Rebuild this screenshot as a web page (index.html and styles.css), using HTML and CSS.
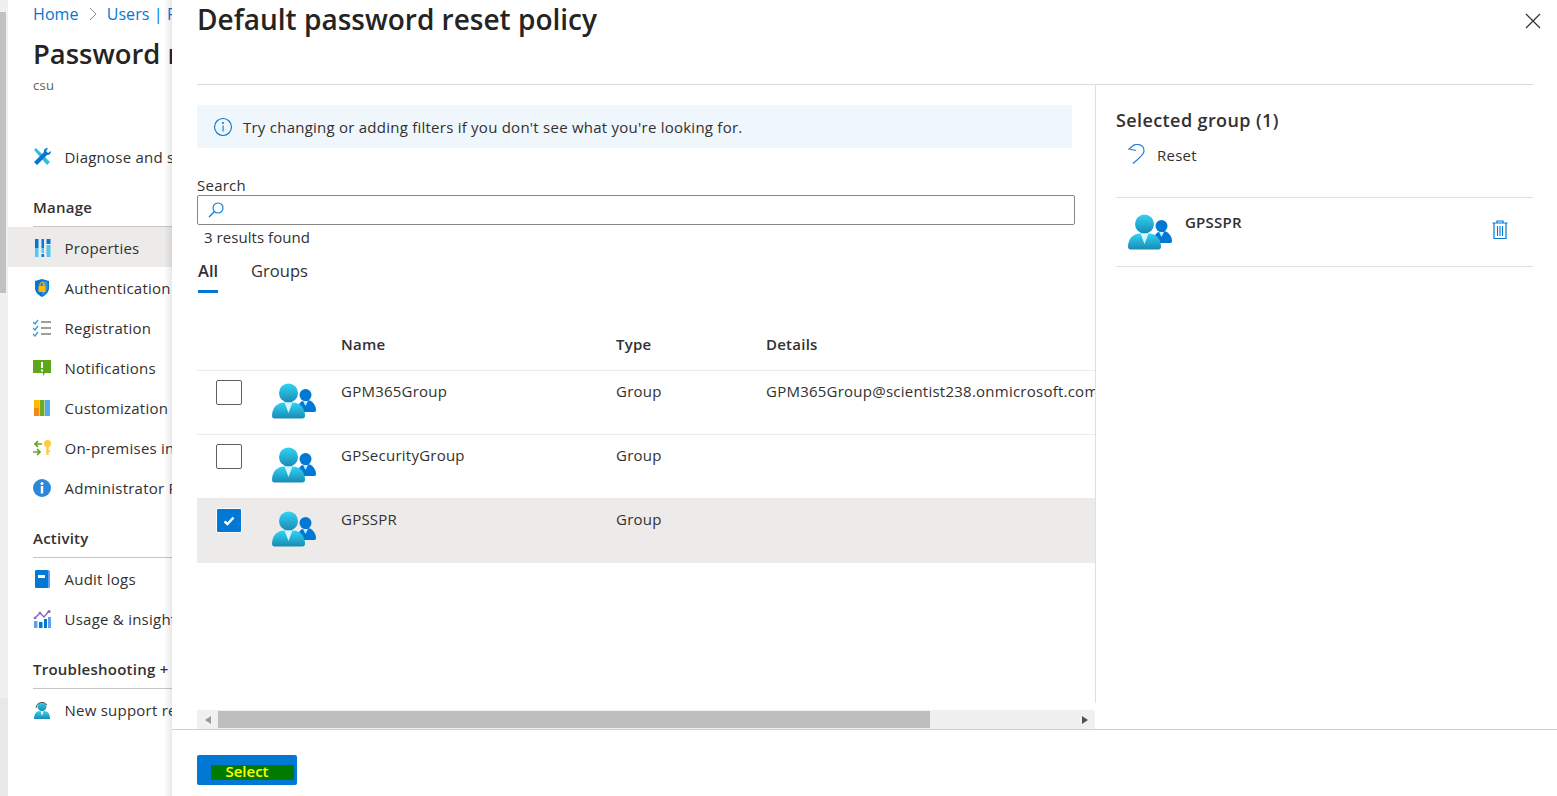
FILE: index.html
```html
<!DOCTYPE html>
<html lang="en">
<head>
  <meta charset="UTF-8">
  <meta name="viewport" content="width=device-width, initial-scale=1.0">
  <title>Default password reset policy</title>
  <link rel="stylesheet" href="styles.css">
</head>
<body>
  <svg class="defs" width="0" height="0">
    <defs>
      <linearGradient id="front" x1="0" y1="0" x2="0" y2="1">
        <stop offset="0" stop-color="#32d4f5"/>
        <stop offset="1" stop-color="#198ab3"/>
      </linearGradient>
      <symbol id="group" viewBox="0 0 44 36">
        <path d="M26 24c1-4 4-7 8-7h1c5 0 9 5 9 10 0 1-.6 2-1.500 2H30z" fill="#0078d4"/>
        <circle cx="33.500" cy="12" r="6" fill="#0078d4"/>
        <path d="M31 18h5l-2.500 5z" fill="#c3f1ff"/>
        <path d="M0 33c0-8 5-13.500 12-13.500h9c7 0 12 5.500 12 13.500 0 1.500-1 2.500-2.500 2.500h-28C1 35.500 0 34.500 0 33z" fill="url(#front)"/>
        <circle cx="16.500" cy="10" r="9.500" fill="url(#front)"/>
        <path d="M12.500 19.500h8L16.500 30z" fill="#d5f6ff"/>
      </symbol>
    </defs>
  </svg>

  <aside class="scroll-strip">
    <div class="scroll-thumb"></div>
    <div class="scroll-low"></div>
  </aside>

  <nav class="blade">
    <div class="crumbs"><a>Home</a><svg class="chev" width="8" height="14" viewBox="0 0 8 14"><path d="M1 1l6 6-6 6" fill="none" stroke="#8a8a8a"/></svg><a>Users | Password reset</a></div>
    <h2 class="blade-title">Password reset</h2>
    <div class="blade-sub">csu</div>

    <div class="nav-row first">
      <svg class="nav-icon" viewBox="0 0 18 18"><path d="M1 2l2-2 14 14-3 3z" fill="#32bedd"/><path d="M1 14L11 4c-.5-2 1-4 4-4l-2 3 2 2 3-2c0 3-2 4.500-4 4L4 17z" fill="#0078d4"/></svg>
      Diagnose and solve problems
    </div>

    <div class="nav-head first-head">Manage</div>
    <div class="nav-row active">
      <svg class="nav-icon" viewBox="0 0 18 18"><rect x="2" y="0" width="3.500" height="9" fill="#0078d4"/><rect x="2" y="9" width="3.500" height="9" fill="#50c8f0"/><rect x="8.500" y="0" width="2.500" height="9" fill="#0078d4"/><rect x="8.500" y="9" width="2.500" height="5" fill="#50c8f0"/><rect x="8.500" y="15" width="2.500" height="3" fill="#0078d4"/><rect x="13.500" y="0" width="4" height="5" fill="#0078d4"/><rect x="13.500" y="6" width="4" height="12" fill="#50c8f0"/></svg>
      Properties
    </div>
    <div class="nav-row">
      <svg class="nav-icon" viewBox="0 0 18 18"><path d="M9 0l7 2v7c0 4-3 7-7 9-4-2-7-5-7-9V2z" fill="#0078d4"/><path d="M9 1.500l5.500 1.500v6c0 3-2.500 5.500-5.500 7z" fill="#3a96dd"/><rect x="5.500" y="7" width="7" height="6" rx="1" fill="#ffb900"/><path d="M7 7V5.500a2 2 0 0 1 4 0V7" fill="none" stroke="#ffb900" stroke-width="1.200"/></svg>
      Authentication methods
    </div>
    <div class="nav-row">
      <svg class="nav-icon" viewBox="0 0 18 18"><path d="M0 3l2 2 3-4M0 9l2 2 3-4M0 15l2 2 3-4" fill="none" stroke="#3a96dd" stroke-width="1.300"/><path d="M8 3h10M8 9h10M8 15h10" stroke="#a19f9d" stroke-width="2"/></svg>
      Registration
    </div>
    <div class="nav-row">
      <svg class="nav-icon" viewBox="0 0 18 18"><path d="M0 1h18v13h-6l-2 3v-3H0z" fill="#5ea71d"/><rect x="8" y="3" width="2" height="6" fill="#fff"/><rect x="8" y="10.500" width="2" height="2" fill="#fff"/></svg>
      Notifications
    </div>
    <div class="nav-row">
      <svg class="nav-icon" viewBox="0 0 18 18"><rect x="1" y="1" width="5" height="16" fill="#ffb900"/><rect x="1" y="9" width="5" height="8" fill="#f7890f"/><rect x="6.500" y="1" width="5" height="16" fill="#6eab2c"/><rect x="12" y="1" width="5" height="16" fill="#57a8ee"/></svg>
      Customization
    </div>
    <div class="nav-row">
      <svg class="nav-icon" viewBox="0 0 18 18"><path d="M9 5H2M5 2L2 5l3 3M0 13h7M4 10l3 3-3 3" fill="none" stroke="#5ea71d" stroke-width="1.700"/><circle cx="14.500" cy="4.500" r="3.500" fill="#ffc83d"/><rect x="13.300" y="6" width="2.400" height="10" fill="#ffc83d"/><rect x="15.700" y="11" width="1.300" height="2" fill="#ffc83d"/></svg>
      On-premises integration
    </div>
    <div class="nav-row">
      <svg class="nav-icon" viewBox="0 0 18 18"><circle cx="9" cy="9" r="9" fill="#2b88d8"/><circle cx="9" cy="4.500" r="1.500" fill="#fff"/><rect x="7.800" y="7" width="2.400" height="7.500" fill="#fff"/></svg>
      Administrator Policy
    </div>

    <div class="nav-head">Activity</div>
    <div class="nav-row">
      <svg class="nav-icon" viewBox="0 0 18 18"><rect x="2" y="0" width="15" height="18" rx="1.500" fill="#5ea0ef"/><rect x="2" y="0" width="13" height="18" rx="1.500" fill="#0078d4"/><rect x="5" y="5" width="7" height="3" fill="#fff"/></svg>
      Audit logs
    </div>
    <div class="nav-row">
      <svg class="nav-icon" viewBox="0 0 18 18"><rect x="1" y="11" width="3.500" height="7" fill="#5ea0ef"/><rect x="6" y="12" width="3.500" height="6" fill="#0078d4"/><rect x="11" y="9" width="3" height="9" fill="#0078d4"/><rect x="15" y="7" width="3" height="11" fill="#5ea0ef"/><path d="M2 8l5-5 4 4 5-6" fill="none" stroke="#8661c5" stroke-width="1.300"/><circle cx="2" cy="8" r="1.300" fill="#8661c5"/><circle cx="7" cy="3" r="1.300" fill="#8661c5"/><circle cx="16" cy="1.500" r="1.500" fill="#8661c5"/></svg>
      Usage &amp; insights
    </div>

    <div class="nav-head">Troubleshooting + Support</div>
    <div class="nav-row">
      <svg class="nav-icon" viewBox="0 0 18 18"><path d="M1 18c0-5 2-8 6-8h4c4 0 6 3 6 8z" fill="url(#front)"/><circle cx="9" cy="5.500" r="4.500" fill="url(#front)"/><path d="M7.500 10h3L9 15z" fill="#fff"/><path d="M3 7a6 6 0 0 1 11-3" fill="none" stroke="#605e5c"/></svg>
      New support request
    </div>
  </nav>

  <main class="panel">
    <header class="panel-head">
      <h1>Default password reset policy</h1>
      <svg class="close" width="16" height="16" viewBox="0 0 16 16"><path d="M1 1l14 14M15 1L1 15" stroke="#323130" stroke-width="1.200"/></svg>
    </header>

    <div class="panel-body">
      <section class="picker">
        <div class="banner">
          <svg width="20" height="20" viewBox="0 0 20 20"><circle cx="10" cy="10" r="8.500" fill="none" stroke="#0078d4" stroke-width="1.100"/><circle cx="10" cy="6" r="1" fill="#0078d4"/><rect x="9.500" y="8.500" width="1.100" height="6" fill="#0078d4"/></svg>
          <span>Try changing or adding filters if you don't see what you're looking for.</span>
        </div>

        <label class="search-label" for="search">Search</label>
        <div class="search-box">
          <svg width="18" height="18" viewBox="0 0 18 18"><circle cx="11" cy="7" r="5" fill="none" stroke="#0078d4" stroke-width="1.100"/><path d="M7.500 10.500L2 16" stroke="#0078d4" stroke-width="1.200"/></svg>
          <input id="search" type="text">
        </div>
        <div class="result-count">3 results found</div>

        <div class="tabs">
          <div class="tab on">All</div>
          <div class="tab">Groups</div>
        </div>

        <div class="results">
          <div class="row head"><span></span><span></span><span>Name</span><span>Type</span><span>Details</span></div>
          <div class="row item">
            <span class="check"></span>
            <svg class="group-icon"><use href="#group"/></svg>
            <span>GPM365Group</span><span>Group</span><span>GPM365Group@scientist238.onmicrosoft.com</span>
          </div>
          <div class="row item">
            <span class="check"></span>
            <svg class="group-icon"><use href="#group"/></svg>
            <span>GPSecurityGroup</span><span>Group</span><span></span>
          </div>
          <div class="row item selected">
            <span class="check checked"><svg width="12" height="10" viewBox="0 0 12 10"><path d="M1.500 5.500l3 2.500 6-6.500" fill="none" stroke="#fff" stroke-width="2.400"/></svg></span>
            <svg class="group-icon"><use href="#group"/></svg>
            <span>GPSSPR</span><span>Group</span><span></span>
          </div>
        </div>

        <div class="hscroll">
          <span class="arrow left"></span>
          <div class="hscroll-track"><div class="hscroll-thumb"></div></div>
          <span class="arrow right"></span>
        </div>
      </section>

      <section class="chosen">
        <h3>Selected group (1)</h3>
        <div class="reset">
          <svg width="20" height="22" viewBox="0 0 20 22"><path d="M7.500.5L2 5l7 1.500M2 5C5 2 8 0 11 .5c4 .5 6 3.500 6 6.500 0 4-6 8-11 12.500" fill="none" stroke="#2b7cd3" stroke-width="1.200"/></svg>
          <span>Reset</span>
        </div>
        <div class="chosen-item">
          <svg class="group-icon"><use href="#group"/></svg>
          <span class="chosen-name">GPSSPR</span>
          <svg class="trash" width="16" height="20" viewBox="0 0 16 20"><path d="M.5 3h15M5 3V1h6v2M2 3v15.500h12V3" fill="none" stroke="#0078d4" stroke-width="1.200"/><path d="M5.500 6v10M8 6v10M10.500 6v10" stroke="#0078d4" stroke-width="1.100"/></svg>
        </div>
      </section>
    </div>

    <footer class="panel-foot">
      <button class="select-btn"><span>Select</span></button>
    </footer>
  </main>
</body>
</html>
```

FILE: styles.css
```css
html, body { margin: 0; height: 100%; }
body { display: flex; height: 796px; overflow: hidden; background: #fff; color: #323130; font-family: "Open Sans", "Noto Sans", Arial, sans-serif; font-size: 15px; letter-spacing: .24px; }
.defs { position: absolute; }

.scroll-strip { flex: 0 0 8px; background: #f0f0f0; padding-top: 12px; box-sizing: border-box; }
.scroll-thumb { width: 6px; height: 281px; background: #c1c1c1; }
.scroll-low { height: 98px; margin-top: 405px; background: #e8e8e8; }

.blade { flex: 0 0 164px; position: relative; overflow: hidden; white-space: nowrap; }
.blade::after { content: ""; position: absolute; top: 0; right: 0; bottom: 0; width: 8px; background: linear-gradient(to right, rgba(0,0,0,0), rgba(0,0,0,.09)); }
.crumbs { display: flex; align-items: center; gap: 10px; height: 28px; padding-left: 25px; font-size: 16px; letter-spacing: .1px; color: #0078d4; }
.crumbs > * { flex: 0 0 auto; }
.blade-title { margin: 7px 0 0 25px; font-size: 27.4px; line-height: 38px; font-weight: 600; letter-spacing: 0; color: #252423; }
.blade-sub { margin: 3px 0 0 25px; font-size: 13px; line-height: 18px; color: #605e5c; }
.nav-row { display: flex; align-items: center; height: 40px; padding: 1px 0 0 25px; box-sizing: border-box; color: #323130; }
.nav-row.first { margin-top: 43px; padding-top: 0; }
.nav-row.active { background: #edebe9; }
.nav-icon { flex: 0 0 18px; width: 18px; height: 18px; margin-right: 13.500px; }
.nav-head { margin: 19px 0 0 25px; height: 32px; line-height: 24px; box-sizing: border-box; border-bottom: 1px solid #c8c6c4; font-weight: 600; }
.nav-head.first-head { margin-top: 18px; }

.panel { flex: 1; display: flex; flex-direction: column; min-width: 0; }
.panel-head { display: flex; justify-content: space-between; align-items: flex-start; margin: 0 24px 0 25px; height: 84px; border-bottom: 1px solid #dcdcdc; box-sizing: content-box; }
.panel-head h1 { margin: -1px 0 0; font-size: 28px; line-height: 40px; font-weight: 600; letter-spacing: 0; color: #252423; }
.close { margin: 13px -8px 0 0; }

.panel-body { flex: 1; display: flex; min-height: 0; }
.picker { flex: 0 0 898px; width: 898px; margin-left: 25px; overflow: hidden; display: flex; flex-direction: column; }
.banner { display: flex; align-items: center; gap: 10px; width: 875px; height: 43px; margin-top: 20px; padding-left: 16px; box-sizing: border-box; background: #eff6fc; }
.search-label { display: block; margin-top: 29px; line-height: 17px; }
.search-box { display: flex; align-items: center; width: 878px; height: 30px; margin: 1px 0 0; padding-left: 9px; box-sizing: border-box; border: 1px solid #8a8886; border-radius: 2px; }
.search-box input { flex: 1; border: 0; outline: 0; background: none; }
.result-count { margin: 4px 0 0 7px; line-height: 17px; letter-spacing: .05px; }
.tabs { display: flex; gap: 33px; margin-top: 12px; padding-left: 1px; height: 37px; font-size: 16.5px; letter-spacing: 0; }
.tab { line-height: 26px; height: 32px; }
.tab.on { font-weight: 600; border-bottom: 3px solid #0078d4; }

.results { flex: 1; margin-top: 15px; }
.row { display: grid; grid-template-columns: 75px 69px 275px 150px 1fr; white-space: nowrap; overflow: hidden; }
.row.head { height: 61px; padding-top: 24px; box-sizing: border-box; line-height: 20px; font-weight: 600; border-bottom: 1px solid #edebe9; }
.row.item { height: 64px; padding-top: 9px; box-sizing: border-box; line-height: 22px; border-bottom: 1px solid #edebe9; }
.row.selected { background: #edebe9; }
.check { display: flex; align-items: center; justify-content: center; width: 26px; height: 25px; margin-left: 19px; box-sizing: border-box; border: 1px solid #605e5c; border-radius: 2px; background: #fff; }
.check.checked { background: #0078d4; border-color: #fff; }
.group-icon { width: 44px; height: 36px; margin-top: 3px; }

.hscroll { display: flex; align-items: center; flex: 0 0 19px; background: #f0f0f0; }
.arrow { flex: 0 0 21px; display: flex; justify-content: center; }
.arrow::before { content: ""; border: 4px solid transparent; }
.arrow.left::before { border-right: 6px solid #9a9a9a; border-left: 0; }
.arrow.right::before { border-left: 6px solid #505050; border-right: 0; }
.hscroll-track { flex: 1; height: 17px; }
.hscroll-thumb { width: 712px; height: 17px; background: #bebebe; }

.chosen { flex: 1; min-width: 0; margin: 0 24px 26px 0; padding-left: 20px; border-left: 1px solid #e1dfdd; }
.chosen h3 { margin: 22px 0 0; font-size: 18px; line-height: 26px; font-weight: 600; letter-spacing: .4px; color: #323130; }
.reset { display: flex; align-items: center; gap: 10px; height: 24px; margin-top: 10px; padding-left: 11px; }
.chosen-item { display: flex; align-items: flex-start; height: 70px; margin-top: 30px; padding-left: 12px; box-sizing: border-box; border-top: 1px solid #e1dfdd; border-bottom: 1px solid #e1dfdd; position: relative; }
.chosen-item .group-icon { margin-top: 16px; flex: 0 0 44px; }
.chosen-name { margin: 14px 0 0 13px; font-weight: 600; }
.trash { position: absolute; right: 25px; top: 22px; }

.panel-foot { flex: 0 0 67px; border-top: 1px solid #d2d0ce; padding: 25px 0 0 25px; box-sizing: border-box; }
.select-btn { display: flex; align-items: center; justify-content: flex-start; width: 100px; height: 30px; padding: 0 0 0 14px; border: 0; border-radius: 2px; background: #0078d4; font-family: inherit; font-size: 15px; font-weight: 600; color: #ff0; }
.select-btn span { display: block; width: 83px; height: 15px; margin-top: 5px; line-height: 13px; padding-right: 11px; box-sizing: border-box; text-align: center; background: #007a00; }
```
